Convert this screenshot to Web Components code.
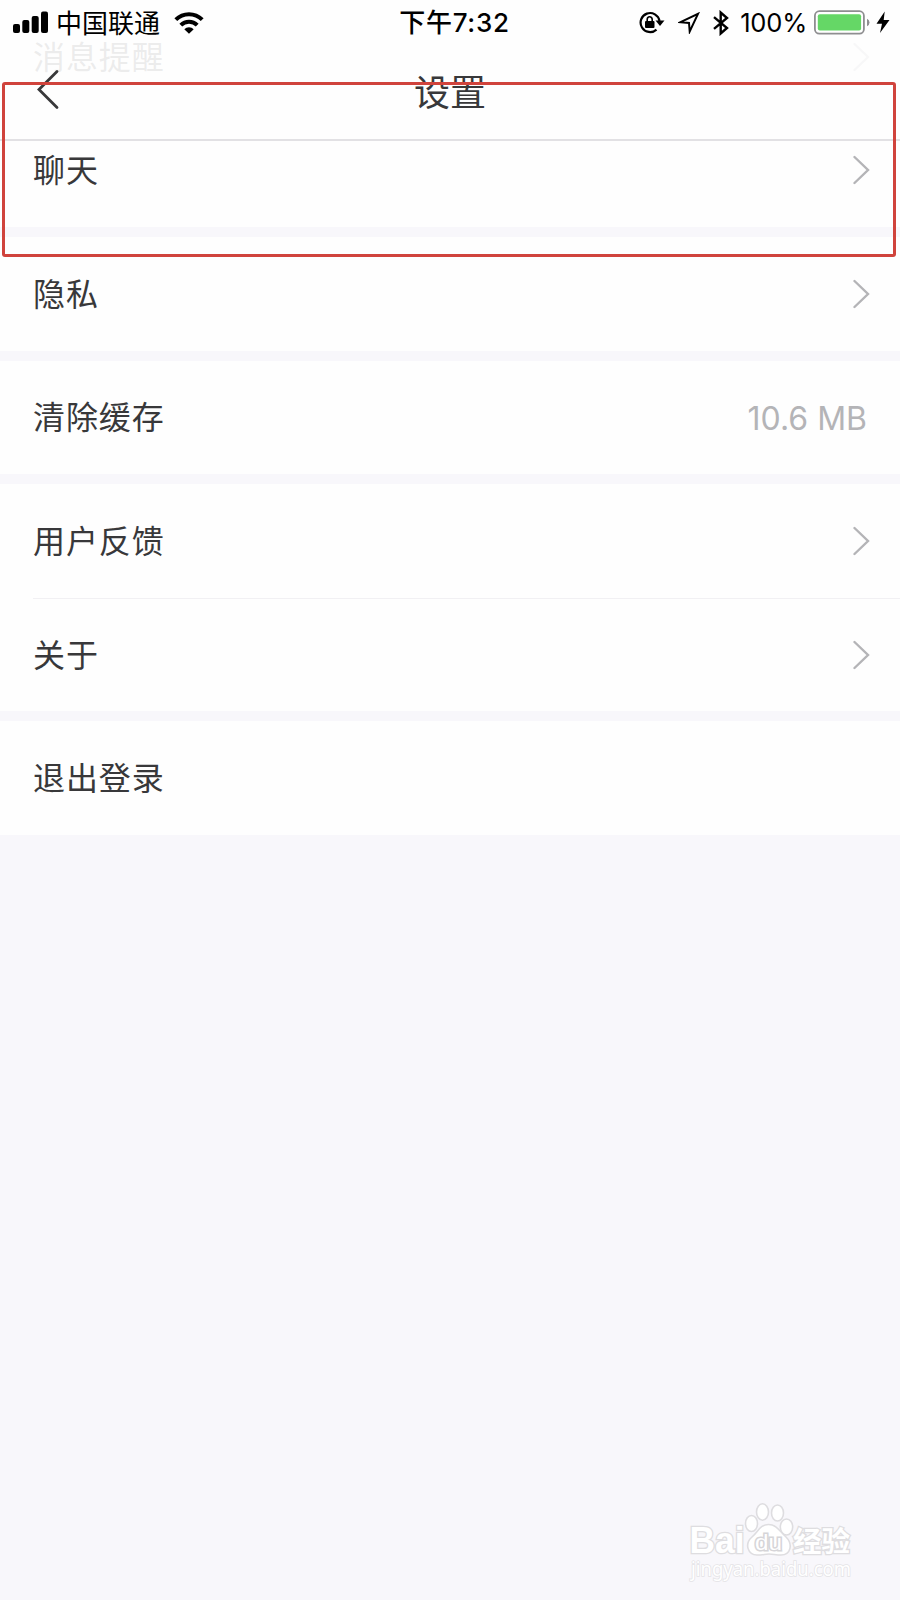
<!DOCTYPE html>
<html lang="zh-CN">
<head>
<meta charset="UTF-8">
<meta name="viewport" content="width=device-width, initial-scale=1.0">
<title>设置</title>
<style>
  body {
    margin: 0;
    background: #f8f7fb;
    font-family: Inter, "Noto Sans CJK SC", sans-serif;
    color: #38383a;
  }
</style>
</head>
<body>
<settings-page>
  <status-bar slot="header" carrier="中国联通" time="下午7:32" battery="100%"></status-bar>
  <nav-bar slot="header">设置</nav-bar>

  <settings-group>
    <settings-row arrow>消息提醒</settings-row>
    <settings-row arrow>聊天</settings-row>
  </settings-group>
  <settings-group>
    <settings-row arrow>隐私</settings-row>
  </settings-group>
  <settings-group>
    <settings-row>清除缓存<span slot="value">10.6 MB</span></settings-row>
  </settings-group>
  <settings-group>
    <settings-row arrow>用户反馈</settings-row>
    <settings-row arrow divider>关于</settings-row>
  </settings-group>
  <settings-group>
    <settings-row>退出登录</settings-row>
  </settings-group>

  <highlight-box slot="overlay"></highlight-box>
  <site-watermark slot="overlay"></site-watermark>
</settings-page>

<script>
class SettingsPage extends HTMLElement {
  connectedCallback() {
    this.attachShadow({ mode: 'open' });
    this.shadowRoot.innerHTML = `
      <style>
        :host {
          display: block;
          position: relative;
          height: 1600px;
          overflow: hidden;
        }

        header {
          position: absolute;
          top: 0;
          left: 0;
          right: 0;
          height: 139px;
          background: rgba(254, 254, 254, 0.91);
          border-bottom: 2px solid #e2e1e4;
        }

        main {
          display: flex;
          flex-direction: column;
          gap: 10px;
        }
      </style>

      <main><slot></slot></main>
      <header><slot name="header"></slot></header>
      <slot name="overlay"></slot>
    `;
  }
}

class StatusBar extends HTMLElement {
  connectedCallback() {
    this.attachShadow({ mode: 'open' });
    this.shadowRoot.innerHTML = `
      <style>
        :host {
          display: grid;
          grid-template-columns: 1fr auto 1fr;
          align-items: center;
          height: 45px;
          padding: 0 10px 0 13px;
          color: #000;
          font-size: 26px;
          line-height: 40px;
        }

        .left, .right {
          display: flex;
          align-items: center;
        }

        .right {
          justify-content: flex-end;
        }

        .carrier {
          margin: 0 14px 0 7px;
          padding-top: 2px;
        }

        .time {
          font-weight: 500;
          font-size: 26px;
          letter-spacing: 0.7px;
          padding-left: 6px;
        }

        .battery {
          font-size: 25.5px;
          letter-spacing: -0.2px;
          margin: 0 7px 0 11px;
          padding-top: 1px;
        }

        svg {
          display: block;
          flex: none;
        }
      </style>

      <div class="left">
        <svg width="36" height="24" viewBox="0 0 36 24">
          <rect x="0" y="13" width="7" height="9" rx="2"/>
          <rect x="9.3" y="9" width="7" height="13" rx="2"/>
          <rect x="18.7" y="5" width="7" height="17" rx="2"/>
          <rect x="28" y="0.5" width="7" height="21.5" rx="2"/>
        </svg>
        <span class="carrier">${this.getAttribute('carrier')}</span>
        <svg width="30" height="22" viewBox="0 0 30 22">
          <g fill="none" stroke="#000" stroke-width="4">
            <path d="M1.8 7.6a18.7 18.7 0 0 1 26.4 0"/>
            <path d="M6.8 13.2a11.6 11.6 0 0 1 16.4 0"/>
          </g>
          <path d="M10.3 17.2a6.6 6.6 0 0 1 9.4 0L15 21.8z"/>
        </svg>
      </div>

      <span class="time">${this.getAttribute('time')}</span>

      <div class="right">
        <svg width="26" height="24" viewBox="0 0 26 24">
          <path d="M17.5 18.6A9.5 9.5 0 1 1 20.5 10" fill="none" stroke="#000" stroke-width="2.2"/>
          <path d="M16.5 9.5h9l-4.5 5.5z"/>
          <rect x="6" y="10" width="9.5" height="7" rx="1"/>
          <path d="M8.2 11V8.5a2.5 2.7 0 0 1 5 0V11" fill="none" stroke="#000" stroke-width="1.6"/>
        </svg>
        <svg width="22" height="22" viewBox="0 0 22 22" style="margin-left: 13px">
          <path d="M2.5 10.2L20 1.8L11.7 19.5L11 11z" fill="none" stroke="#000" stroke-width="2"/>
        </svg>
        <svg width="16" height="26" viewBox="0 0 16 26" style="margin-left: 13px">
          <path d="M1 7.2L14 18L7.7 23.5V2.5L14 8L1 18.8" fill="none" stroke="#000" stroke-width="2.4"/>
        </svg>
        <span class="battery">${this.getAttribute('battery')}</span>
        <svg width="57" height="26" viewBox="0 0 57 26">
          <rect x="0.9" y="1.2" width="49" height="22.5" rx="4.5" fill="#fff" stroke="#8e8e90" stroke-width="1.8"/>
          <rect x="3.8" y="4.3" width="43.3" height="16.3" rx="2" fill="#65d766"/>
          <path d="M53 8.8q2.5 1 2.5 3.7t-2.5 3.7z" fill="#8e8e90"/>
        </svg>
        <svg width="14" height="24" viewBox="0 0 14 24" style="margin-left: 5px">
          <path d="M8.7 0.5L0.5 12.7H6L4 22L13.5 9H7.7z"/>
        </svg>
      </div>
    `;
  }
}

class NavBar extends HTMLElement {
  connectedCallback() {
    this.attachShadow({ mode: 'open' });
    this.shadowRoot.innerHTML = `
      <style>
        :host {
          display: grid;
          grid-template-columns: 100px 1fr 100px;
          align-items: center;
          height: 94px;
        }

        svg {
          display: block;
          margin: 0 0 4px 36px;
        }

        .title {
          text-align: center;
          font-size: 36px;
          line-height: 90px;
          padding-top: 1px;
        }
      </style>

      <svg width="26" height="42" viewBox="0 0 26 42">
        <path d="M21 2.5L3 20.5L21 38.5" fill="none" stroke="#38383a" stroke-width="2.8" stroke-linecap="round"/>
      </svg>
      <div class="title"><slot></slot></div>
    `;
  }
}

class SettingsGroup extends HTMLElement {
  connectedCallback() {
    this.attachShadow({ mode: 'open' });
    this.shadowRoot.innerHTML = `
      <style>
        :host {
          display: block;
          background: #fefefe;
        }
      </style>
      <slot></slot>
    `;
  }
}

class SettingsRow extends HTMLElement {
  connectedCallback() {
    const arrow = `
      <svg width="17" height="30" viewBox="0 0 17 30">
        <path d="M1.5 2L15 15L1.5 28" fill="none" stroke="#b4b4b7" stroke-width="2.4" stroke-linecap="round"/>
      </svg>`;

    this.attachShadow({ mode: 'open' });
    this.shadowRoot.innerHTML = `
      <style>
        :host {
          display: block;
          padding-left: 33px;
        }

        .row {
          display: flex;
          align-items: center;
          justify-content: space-between;
          box-sizing: border-box;
          height: 113.5px;
          padding-right: 30px;
          line-height: 48px;
        }

        :host([divider]) .row {
          border-top: 1px solid #f1f0f3;
        }

        .label {
          font-size: 32px;
          letter-spacing: 0.9px;
          padding-top: 2px;
        }

        .value {
          font-size: 32px;
          color: #b4b4b7;
          margin-right: 3px;
          padding-top: 3px;
        }
      </style>

      <div class="row">
        <span class="label"><slot></slot></span>
        ${this.hasAttribute('arrow') ? arrow : '<span class="value"><slot name="value"></slot></span>'}
      </div>
    `;
  }
}

class HighlightBox extends HTMLElement {
  connectedCallback() {
    this.attachShadow({ mode: 'open' });
    this.shadowRoot.innerHTML = `
      <style>
        :host {
          display: block;
          position: absolute;
          left: 2px;
          top: 82px;
          width: 894px;
          height: 175px;
          box-sizing: border-box;
          border: 3px solid #d0433c;
          border-radius: 3px;
        }
      </style>
    `;
  }
}

class SiteWatermark extends HTMLElement {
  connectedCallback() {
    this.attachShadow({ mode: 'open' });
    this.shadowRoot.innerHTML = `
      <style>
        :host {
          display: block;
          position: absolute;
          left: 686px;
          top: 1500px;
        }

        svg {
          display: block;
          overflow: visible;
        }

        text {
          paint-order: stroke;
        }
      </style>

      <svg width="172" height="90" viewBox="0 0 172 90" fill="#fff" stroke="#dedde0" stroke-width="1.6">
        <text x="3.5" y="53" font-family="Liberation Sans" font-weight="bold" font-size="36" textLength="55" lengthAdjust="spacingAndGlyphs" stroke-width="2.6">Bai</text>
        <ellipse cx="65.5" cy="23.5" rx="6" ry="8"/>
        <ellipse cx="76.5" cy="12" rx="6" ry="8.2"/>
        <ellipse cx="91.5" cy="13" rx="6" ry="8"/>
        <ellipse cx="100.5" cy="27" rx="6.2" ry="8"/>
        <path d="M82.5 24.5C74 24.5 72 32 66 37C58 44 62 55 71 55C77 55 79 54 83 54C87 54 90 55 95 55C105 55 107 44 100 37C94 32 91 24.5 82.5 24.5z"/>
        <text x="69" y="50" font-family="Liberation Sans" font-size="22" textLength="27" lengthAdjust="spacingAndGlyphs" stroke="#d6d5d8" stroke-width="3">du</text>
        <text x="107" y="52" font-family="Noto Sans CJK SC, sans-serif" font-weight="bold" font-size="28" textLength="57" lengthAdjust="spacingAndGlyphs" stroke-width="2.6">经验</text>
        <text x="5" y="76" font-family="Noto Sans, sans-serif" font-size="19.5" textLength="160" lengthAdjust="spacingAndGlyphs" stroke="#e4e3e6">jingyan.baidu.com</text>
      </svg>
    `;
  }
}

customElements.define('settings-page', SettingsPage);
customElements.define('status-bar', StatusBar);
customElements.define('nav-bar', NavBar);
customElements.define('settings-group', SettingsGroup);
customElements.define('settings-row', SettingsRow);
customElements.define('highlight-box', HighlightBox);
customElements.define('site-watermark', SiteWatermark);
</script>
</body>
</html>
